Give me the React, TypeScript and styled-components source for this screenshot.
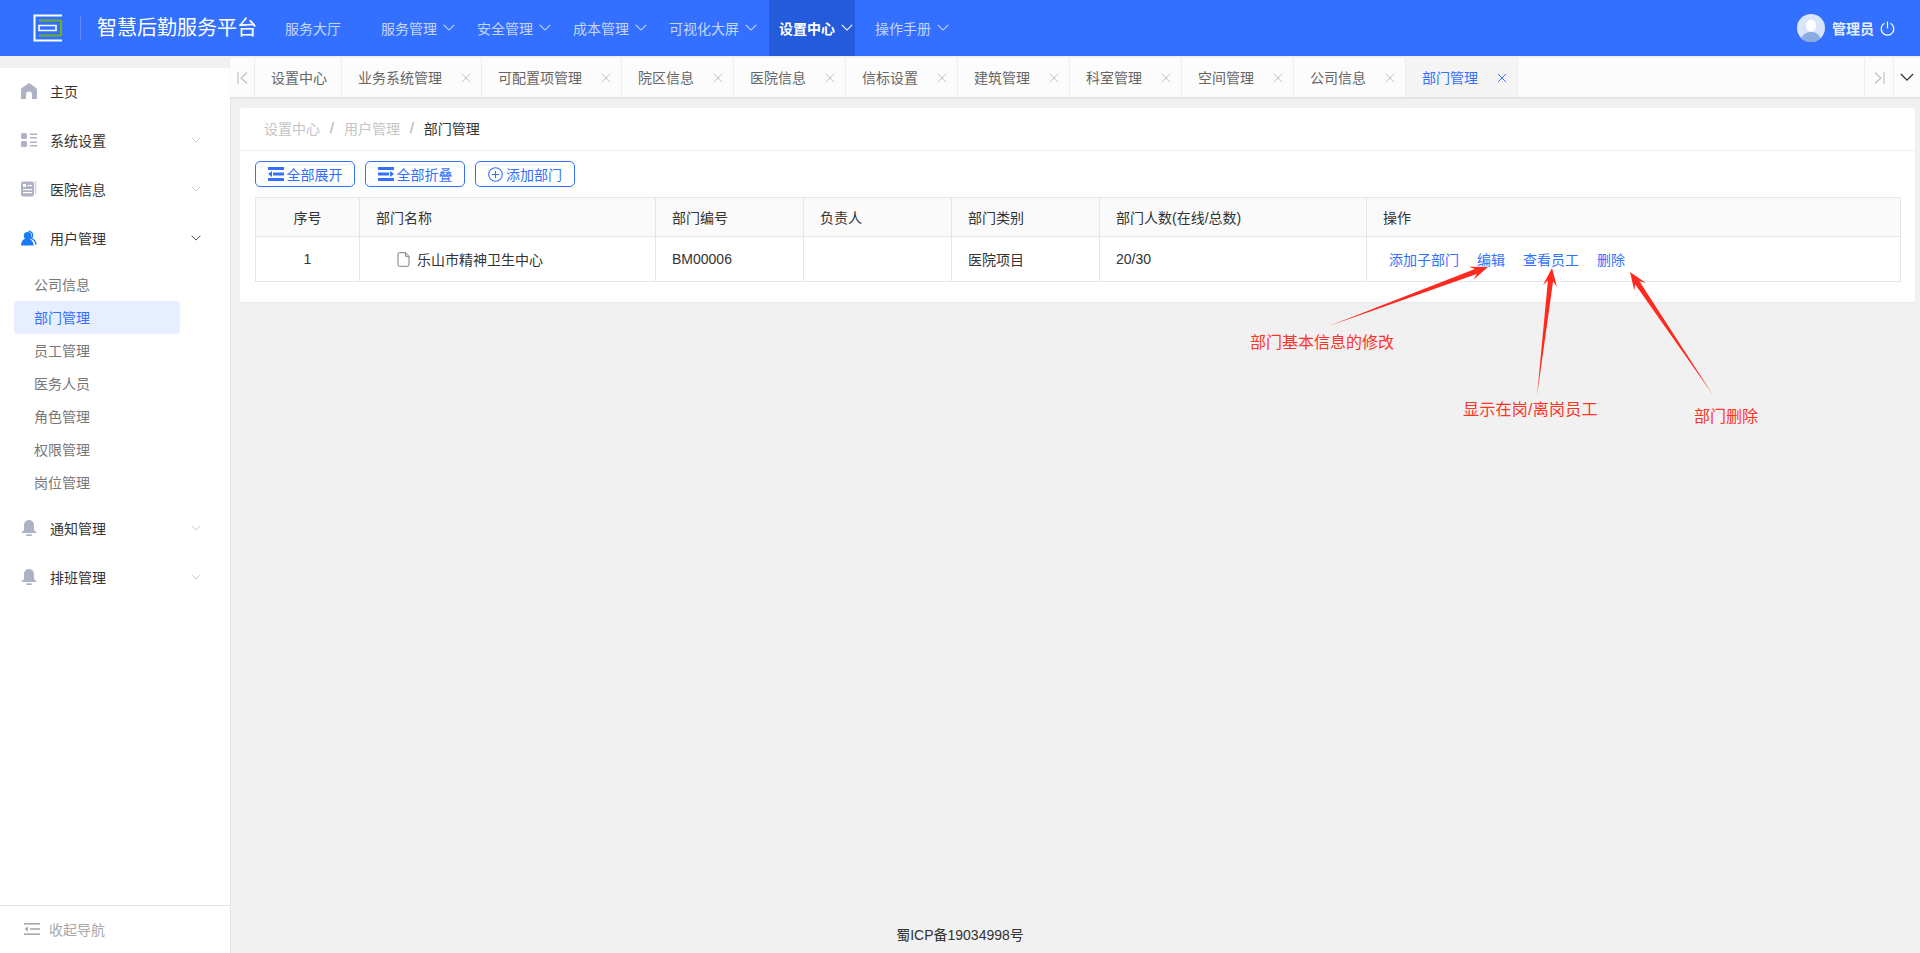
import React from 'react';
import styled, {createGlobalStyle} from 'styled-components';

const GlobalStyle = createGlobalStyle`
    * {
        box-sizing: border-box;
    }
    html, body {
        margin: 0;
        padding: 0;
        background: #f1f1f1;
        font-family: "Liberation Sans", "Noto Sans CJK SC", sans-serif;
        font-size: 14px;
        color: #333;
    }
`

const Page = styled.div`
    position: relative;
    display: flex;
    flex-direction: column;
    width: 1920px;
    height: 953px;
    overflow: hidden;
`

/* top bar */
const TopBar = styled.header`
    display: flex;
    align-items: center;
    flex: none;
    height: 56px;
    padding-left: 33px;
    background: #3370ff;
    color: #fff;
`
const LogoDivider = styled.span`
    width: 1px;
    height: 24px;
    margin: 0 16px 0 17px;
    background: rgba(255, 255, 255, .22);
`
const Title = styled.h1`
    width: 178px;
    margin: 0;
    font-size: 20px;
    font-weight: 400;
    line-height: 56px;
`
const TopMenu = styled.nav`
    display: flex;
    gap: 10px;
    height: 56px;
`
const TopItem = styled.a<{ $active?: boolean; $plain?: boolean }>`
    display: flex;
    align-items: center;
    gap: 6px;
    padding: 0 ${p => (p.$plain ? '20px' : '2px')} 0 10px;
    color: ${p => (p.$active ? '#fff' : 'rgba(255, 255, 255, .72)')};
    background: ${p => (p.$active ? '#245bdb' : 'transparent')};
    font-weight: ${p => (p.$active ? 700 : 400)};
`
const UserBox = styled.div`
    display: flex;
    align-items: center;
    margin-left: auto;
    padding-right: 25px;
    font-weight: 700;
    font-size: 14px;
`
const UserName = styled.span`
    margin: 0 6px 0 7px;
    color: rgba(255, 255, 255, .9);
`

/* body */
const Body = styled.div`
    display: flex;
    flex: 1;
    min-height: 0;
`
const SideBar = styled.aside`
    display: flex;
    flex-direction: column;
    flex: none;
    width: 230px;
    margin-top: 12px;
    background: #fff;
    box-shadow: 1px 0 0 #e6e6e6;
`
const SideMenu = styled.div`
    flex: 1;
    margin-top: -1px;
`
const SideItem = styled.div`
    display: flex;
    align-items: center;
    height: 49px;
    padding: 0 29px 2px 21px;
    color: #333;
`
const SideIcon = styled.span`
    display: flex;
    width: 16px;
    margin-right: 13px;
`
const SideLabel = styled.span`
    flex: 1;
`
const SubList = styled.div`
    margin: 5px 0;
`
const SubItem = styled.div<{ $active?: boolean }>`
    display: flex;
    align-items: center;
    width: 166px;
    height: 33px;
    margin-left: 14px;
    padding: 0 0 2px 20px;
    border-radius: 4px;
    color: ${p => (p.$active ? '#3370ff' : '#777')};
    background: ${p => (p.$active ? '#e6eeff' : 'transparent')};
`
const Collapse = styled.div`
    display: flex;
    align-items: center;
    gap: 9px;
    flex: none;
    height: 48px;
    padding: 0 0 2px 24px;
    border-top: 1px solid #e0e0e0;
    color: #a8a8a8;
`

/* right side */
const Main = styled.main`
    display: flex;
    flex-direction: column;
    flex: 1;
    min-width: 0;
`
const TabBar = styled.div`
    display: flex;
    flex: none;
    height: 40px;
    margin-top: 2px;
    background: #fcfcfc;
    border-bottom: 1px solid #dfdfdf;
    box-shadow: 0 1px 2px rgba(0, 0, 0, .05);
`
const TabArrow = styled.span<{ $wide?: boolean }>`
    display: flex;
    align-items: center;
    justify-content: center;
    flex: none;
    width: ${p => (p.$wide ? '29px' : '25px')};
    border-right: 1px solid #eee;
`
const Tab = styled.div<{ $active?: boolean }>`
    display: flex;
    align-items: center;
    flex: none;
    padding: 0 10px 2px 16px;
    border-right: 1px solid #eee;
    color: ${p => (p.$active ? '#3370ff' : '#666')};
    background: ${p => (p.$active ? '#f5f5f5' : 'transparent')};
`
const TabFirst = styled(Tab)`
    padding-right: 14px;
`
const TabClose = styled.span`
    display: flex;
    margin: 2px 0 0 19px;
`
const TabSpacer = styled.div`
    flex: 1;
    border-right: 1px solid #eee;
`
const TabMore = styled.span`
    display: flex;
    align-items: center;
    justify-content: center;
    flex: none;
    width: 26px;
`
const Card = styled.section`
    flex: none;
    margin: 10px 5px 0 10px;
    padding-bottom: 20px;
    background: #fff;
    border-radius: 3px;
    box-shadow: 0 1px 2px rgba(0, 0, 0, .04);
`
const Crumbs = styled.div`
    display: flex;
    align-items: center;
    height: 43px;
    padding: 0 0 2px 24px;
    border-bottom: 1px solid #efefef;
    color: #c4c4c4;
`
const CrumbSep = styled.span`
    margin: 0 10px;
    color: #aaa;
`
const CrumbNow = styled.span`
    color: #333;
`
const ToolRow = styled.div`
    display: flex;
    gap: 10px;
    padding: 10px 15px;
`
const ToolButton = styled.button`
    display: flex;
    align-items: center;
    justify-content: center;
    gap: 3px;
    width: 100px;
    height: 26px;
    padding: 0;
    border: 1px solid #3370ff;
    border-radius: 5px;
    background: #fff;
    color: #3370ff;
    font: inherit;
`
const Table = styled.table`
    width: 1645px;
    margin-left: 15px;
    table-layout: fixed;
    border-collapse: collapse;
`
const Th = styled.th`
    height: 39px;
    padding: 0 16px;
    border: 1px solid #e6e6e6;
    background: #fafafa;
    font-weight: 400;
    text-align: left;
    color: #333;
`
const ThCenter = styled(Th)`
    text-align: center;
`
const Td = styled.td`
    height: 45px;
    padding: 0 16px;
    border: 1px solid #e6e6e6;
    color: #333;
`
const TdCenter = styled(Td)`
    text-align: center;
`
const TreeCell = styled.div`
    display: flex;
    align-items: center;
    gap: 7px;
    padding-left: 21px;
`
const Actions = styled.div`
    display: flex;
    gap: 18px;
    padding-left: 6px;
`
const ActionLink = styled.a`
    color: #3370ff;
`
const Footer = styled.div`
    margin-top: auto;
    padding: 0 230px 8px 0;
    text-align: center;
    line-height: 20px;
    color: #333;
`

/* red notes drawn over the shot */
const Marks = styled.svg`
    position: absolute;
    left: 0;
    top: 0;
    pointer-events: none;
`
const Note = styled.span<{ $left: number; $top: number; $spaced?: boolean }>`
    position: absolute;
    left: ${p => p.$left}px;
    top: ${p => p.$top}px;
    font-size: 16px;
    line-height: 22px;
    letter-spacing: ${p => (p.$spaced ? '.25px' : '0')};
    color: #ff3326;
    white-space: nowrap;
`

const Chevron = ({color = 'currentColor', width = 12}: { color?: string; width?: number }) => (
    <svg width={width} height={width * 0.6} viewBox="0 0 12 7" fill="none">
        <path d="M.8.8 6 6l5.2-5.2" stroke={color} strokeWidth="1.1"/>
    </svg>
);

const Logo = () => (
    <svg width="30" height="28" viewBox="0 0 30 28" fill="none">
        <path d="M29 1.5H1.5v25H29" stroke="#fff" strokeWidth="2"/>
        <path d="M6 6.5h22v15H6" stroke="#6fb01e" strokeWidth="2.2"/>
        <path d="M6 11.5h17v5H6z" stroke="#fff" strokeWidth="1.6"/>
    </svg>
);

const Avatar = () => (
    <svg width="28" height="28" viewBox="0 0 28 28">
        <circle cx="14" cy="14" r="14" fill="#d8e5fb"/>
        <ellipse cx="14" cy="11.5" rx="5" ry="6" fill="#fff"/>
        <path d="M4.5 24.500c1.500-5 5.500-6.500 9.500-6.500s8 1.500 9.500 6.500A14 14 0 0 1 4.500 24.500z" fill="#8cabdf"/>
    </svg>
);

const PowerIcon = () => (
    <svg width="15" height="15" viewBox="0 0 15 15" fill="none" stroke="#fff" strokeWidth="1.200">
        <path d="M4.500 2.300a6.300 6.300 0 1 0 6 0"/>
        <path d="M7.500.5v7"/>
    </svg>
);

const HomeIcon = () => (
    <svg width="16" height="16" viewBox="0 0 16 16" fill="#aeb2c4">
        <path d="M8 0 1.500 4.500C.6 5.100 0 6 0 7v9h5v-4.500a3 3 0 0 1 6 0V16h5V7c0-1-.6-1.900-1.500-2.500z"/>
    </svg>
);

const GridIcon = () => (
    <svg width="16" height="14" viewBox="0 0 16 14" fill="#aeb2c4">
        <rect width="6" height="6" rx="1.500"/>
        <rect y="8" width="6" height="6" rx="1.500"/>
        <rect x="9" y=".5" width="7" height="1.500"/>
        <rect x="9" y="4" width="7" height="1.500"/>
        <rect x="9" y="8.500" width="7" height="1.500"/>
        <rect x="9" y="12" width="7" height="1.500"/>
    </svg>
);

const NewsIcon = () => (
    <svg width="16" height="17" viewBox="0 0 16 17">
        <path d="M14.500 1v13" stroke="#cfd2de" strokeWidth="1.500"/>
        <rect y="1.500" width="13" height="15" rx="2" fill="#aeb2c4"/>
        <rect x="2" y="4" width="3" height="3" fill="#fff"/>
        <rect x="6.500" y="5" width="4.500" height="1.200" fill="#fff"/>
        <rect x="2" y="9" width="9" height="1.200" fill="#fff"/>
        <rect x="2" y="12" width="9" height="1.200" fill="#fff"/>
    </svg>
);

const UsersIcon = () => (
    <svg width="17" height="16" viewBox="0 0 17 16" fill="#1c7af5">
        <circle cx="7" cy="5.500" r="4"/>
        <path d="M0 16c0-4.500 2.500-7.500 6.500-7.500s6.500 3 7 7.500z"/>
        <path d="M8 .8a4.200 4.200 0 0 1 4.300 4.700c-.2 1.300-.8 2.300-1.500 3 2.900.8 4.700 3.300 5.200 6.500" fill="none" stroke="#1c7af5" strokeWidth="1.400"/>
    </svg>
);

const BellIcon = () => (
    <svg width="16" height="16" viewBox="0 0 16 16" fill="#aeb2c4">
        <path d="M8 0C5 0 3 2.300 3 5.300v4.700L0 13h16l-3-3V5.300C13 2.300 11 0 8 0z"/>
        <rect x="5" y="14.300" width="6" height="1.700" rx=".8"/>
    </svg>
);

const BarsIcon = ({flip}: { flip?: boolean }) => (
    <svg width="16" height="14" viewBox="0 0 16 14" fill="#3370ff" style={flip ? {transform: 'scaleX(-1)'} : undefined}>
        <rect width="16" height="3"/>
        <rect y="11" width="16" height="3"/>
        <rect x="5" y="5.500" width="11" height="3"/>
        <path d="M0 7 4 4v6z"/>
    </svg>
);

const PlusCircle = () => (
    <svg width="15" height="15" viewBox="0 0 15 15" fill="none" stroke="#3370ff" strokeWidth="1.100">
        <circle cx="7.500" cy="7.500" r="6.800"/>
        <path d="M7.500 3.800v7.400M3.800 7.500h7.400"/>
    </svg>
);

const FileIcon = () => (
    <svg width="13" height="15" viewBox="0 0 13 15" fill="none" stroke="#7d7d7d" strokeWidth="1">
        <path d="M1 2a1.300 1.300 0 0 1 1.300-1.300H8.500L12 4.300v8.500a1.500 1.500 0 0 1-1.500 1.500H2.500A1.500 1.500 0 0 1 1 12.800z"/>
        <path d="M8.500.7v3.600H12"/>
    </svg>
);

const CollapseIcon = () => (
    <svg width="16" height="12" viewBox="0 0 16 12" fill="#a8a8a8">
        <rect width="16" height="1.600"/>
        <rect y="10.400" width="16" height="1.600"/>
        <rect x="6" y="5.200" width="10" height="1.600"/>
        <path d="M.5 6 4 3.500v5z"/>
    </svg>
);

const CloseIcon = ({color}: { color: string }) => (
    <svg width="10" height="10" viewBox="0 0 10 10" fill="none" stroke={color} strokeWidth="1">
        <path d="m1 1 8 8M9 1 1 9"/>
    </svg>
);

const EdgeArrow = ({right}: { right?: boolean }) => (
    <svg width="11" height="12" viewBox="0 0 11 12" fill="none" stroke="#bdbdbd" strokeWidth="1.100" style={right ? {transform: 'scaleX(-1)'} : undefined}>
        <path d="M1 0v12M10 .5 4 6l6 5.500"/>
    </svg>
);

// tapered snip-tool arrow, thin at the tail and notched under the head
const arrowPoints = (x1: number, y1: number, x2: number, y2: number) => {
    const len = Math.hypot(x2 - x1, y2 - y1);
    const ux = (x2 - x1) / len;
    const uy = (y2 - y1) / len;
    const at = (back: number, side: number) =>
        `${(x2 - ux * back - uy * side).toFixed(1)},${(y2 - uy * back + ux * side).toFixed(1)}`;
    return [`${x1},${y1}`, at(13, 2.6), at(18, 7), `${x2},${y2}`, at(18, -7), at(13, -2.6)].join(' ');
};

const tabs = ['业务系统管理', '可配置项管理', '院区信息', '医院信息', '信标设置', '建筑管理', '科室管理', '空间管理', '公司信息'];
const subs = ['公司信息', '部门管理', '员工管理', '医务人员', '角色管理', '权限管理', '岗位管理'];
const columns = [104, 296, 148, 148, 148, 267, 534];

export default function App() {
    return (
        <Page>
            <GlobalStyle/>
            <TopBar>
                <Logo/>
                <LogoDivider/>
                <Title>智慧后勤服务平台</Title>
                <TopMenu>
                    <TopItem $plain>服务大厅</TopItem>
                    <TopItem>服务管理<Chevron/></TopItem>
                    <TopItem>安全管理<Chevron/></TopItem>
                    <TopItem>成本管理<Chevron/></TopItem>
                    <TopItem>可视化大屏<Chevron/></TopItem>
                    <TopItem $active>设置中心<Chevron/></TopItem>
                    <TopItem>操作手册<Chevron/></TopItem>
                </TopMenu>
                <UserBox>
                    <Avatar/>
                    <UserName>管理员</UserName>
                    <PowerIcon/>
                </UserBox>
            </TopBar>
            <Body>
                <SideBar>
                    <SideMenu>
                        <SideItem><SideIcon><HomeIcon/></SideIcon><SideLabel>主页</SideLabel></SideItem>
                        <SideItem><SideIcon><GridIcon/></SideIcon><SideLabel>系统设置</SideLabel><Chevron color="#c8c8c8" width={10}/></SideItem>
                        <SideItem><SideIcon><NewsIcon/></SideIcon><SideLabel>医院信息</SideLabel><Chevron color="#c8c8c8" width={10}/></SideItem>
                        <SideItem><SideIcon><UsersIcon/></SideIcon><SideLabel>用户管理</SideLabel><Chevron color="#333" width={10}/></SideItem>
                        <SubList>
                            {subs.map(name => (
                                <SubItem key={name} $active={name === '部门管理'}>{name}</SubItem>
                            ))}
                        </SubList>
                        <SideItem><SideIcon><BellIcon/></SideIcon><SideLabel>通知管理</SideLabel><Chevron color="#c8c8c8" width={10}/></SideItem>
                        <SideItem><SideIcon><BellIcon/></SideIcon><SideLabel>排班管理</SideLabel><Chevron color="#c8c8c8" width={10}/></SideItem>
                    </SideMenu>
                    <Collapse><CollapseIcon/>收起导航</Collapse>
                </SideBar>
                <Main>
                    <TabBar>
                        <TabArrow><EdgeArrow/></TabArrow>
                        <TabFirst>设置中心</TabFirst>
                        {tabs.map(name => (
                            <Tab key={name}>{name}<TabClose><CloseIcon color="#c4c4c4"/></TabClose></Tab>
                        ))}
                        <Tab $active>部门管理<TabClose><CloseIcon color="#3370ff"/></TabClose></Tab>
                        <TabSpacer/>
                        <TabArrow $wide><EdgeArrow right/></TabArrow>
                        <TabMore><Chevron color="#333" width={14}/></TabMore>
                    </TabBar>
                    <Card>
                        <Crumbs>
                            设置中心<CrumbSep>/</CrumbSep>用户管理<CrumbSep>/</CrumbSep><CrumbNow>部门管理</CrumbNow>
                        </Crumbs>
                        <ToolRow>
                            <ToolButton><BarsIcon/>全部展开</ToolButton>
                            <ToolButton><BarsIcon flip/>全部折叠</ToolButton>
                            <ToolButton><PlusCircle/>添加部门</ToolButton>
                        </ToolRow>
                        <Table>
                            <colgroup>
                                {columns.map((w, i) => <col key={i} width={w}/>)}
                            </colgroup>
                            <thead>
                                <tr>
                                    <ThCenter>序号</ThCenter>
                                    <Th>部门名称</Th>
                                    <Th>部门编号</Th>
                                    <Th>负责人</Th>
                                    <Th>部门类别</Th>
                                    <Th>部门人数(在线/总数)</Th>
                                    <Th>操作</Th>
                                </tr>
                            </thead>
                            <tbody>
                                <tr>
                                    <TdCenter>1</TdCenter>
                                    <Td><TreeCell><FileIcon/>乐山市精神卫生中心</TreeCell></Td>
                                    <Td>BM00006</Td>
                                    <Td/>
                                    <Td>医院项目</Td>
                                    <Td>20/30</Td>
                                    <Td>
                                        <Actions>
                                            <ActionLink>添加子部门</ActionLink>
                                            <ActionLink>编辑</ActionLink>
                                            <ActionLink>查看员工</ActionLink>
                                            <ActionLink>删除</ActionLink>
                                        </Actions>
                                    </Td>
                                </tr>
                            </tbody>
                        </Table>
                    </Card>
                    <Footer>蜀ICP备19034998号</Footer>
                </Main>
            </Body>
            <Marks width="1920" height="953" viewBox="0 0 1920 953" fill="#ff2a1f">
                <polygon points={arrowPoints(1329, 326, 1488, 267)}/>
                <polygon points={arrowPoints(1537, 396, 1552, 268)}/>
                <polygon points={arrowPoints(1713, 395, 1630, 272)}/>
            </Marks>
            <Note $left={1250} $top={332}>部门基本信息的修改</Note>
            <Note $left={1463} $top={399} $spaced>显示在岗/离岗员工</Note>
            <Note $left={1694} $top={406}>部门删除</Note>
        </Page>
    );
}
